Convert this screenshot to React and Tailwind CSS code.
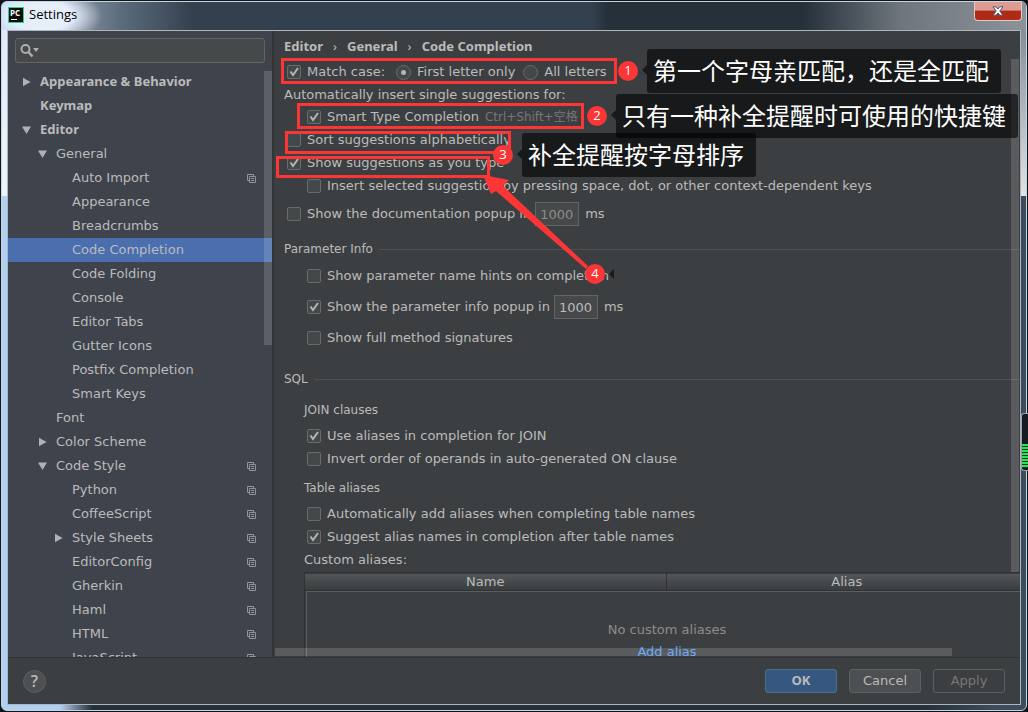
import React from 'react';

const treeItems = [
  { label: 'Appearance & Behavior', level: 0, arrow: 'right', bold: true },
  { label: 'Keymap', level: 0, bold: true },
  { label: 'Editor', level: 0, arrow: 'down', bold: true },
  { label: 'General', level: 1, arrow: 'down' },
  { label: 'Auto Import', level: 2, project: true },
  { label: 'Appearance', level: 2 },
  { label: 'Breadcrumbs', level: 2 },
  { label: 'Code Completion', level: 2, selected: true },
  { label: 'Code Folding', level: 2 },
  { label: 'Console', level: 2 },
  { label: 'Editor Tabs', level: 2 },
  { label: 'Gutter Icons', level: 2 },
  { label: 'Postfix Completion', level: 2 },
  { label: 'Smart Keys', level: 2 },
  { label: 'Font', level: 1 },
  { label: 'Color Scheme', level: 1, arrow: 'right' },
  { label: 'Code Style', level: 1, arrow: 'down', project: true },
  { label: 'Python', level: 2, project: true },
  { label: 'CoffeeScript', level: 2, project: true },
  { label: 'Style Sheets', level: 2, arrow: 'right', project: true },
  { label: 'EditorConfig', level: 2, project: true },
  { label: 'Gherkin', level: 2, project: true },
  { label: 'Haml', level: 2, project: true },
  { label: 'HTML', level: 2, project: true },
  { label: 'JavaScript', level: 2, project: true },
];

const levelPadding = ['pl-3', 'pl-7', 'pl-11'];

const ProjectIcon = () => (
  <svg width="9" height="9" viewBox="0 0 9 9" fill="none" stroke="#8f939a" className="shrink-0">
    <path d="M2 6.5H.5V.5H6.5V2" />
    <path d="M2.5 2.5h6v6h-6zM4 4.5h3M4 6.5h3" />
  </svg>
);

const TreeArrow = ({ direction }) => (
  <svg width="10" height="10" viewBox="0 0 10 10" fill="#afb1b3">
    {direction === 'right' && <path d="M1 .8L8.5 5 1 9.2z" />}
    {direction === 'down' && <path d="M0 1.5h9L4.5 9z" />}
  </svg>
);

const TreeItem = ({ item }) => (
  <li>
    <button
      className={`flex h-6 w-full items-center pr-4 text-left ${levelPadding[item.level]} ${
        item.selected ? 'bg-[#4b6eaf]' : ''
      } ${item.bold ? "font-['Noto_Sans',sans-serif] font-bold" : ''}`}
    >
      <span className="flex w-5 shrink-0 pl-0.5">
        {item.arrow && <TreeArrow direction={item.arrow} />}
      </span>
      <span className="grow whitespace-nowrap">{item.label}</span>
      {item.project && <ProjectIcon />}
    </button>
  </li>
);

const Sidebar = () => (
  <aside className="relative flex w-[266px] shrink-0 flex-col overflow-hidden border-r-2 border-[#333537] bg-[#3f434c]">
    <label className="mx-[7px] my-[7px] flex h-[25px] shrink-0 items-center rounded-[3px] border border-[#646464] bg-[#45494a] px-1">
      <svg width="19" height="14" viewBox="0 0 19 14" fill="none" stroke="#adadad" strokeWidth="2">
        <circle cx="5.5" cy="5" r="4" />
        <path d="M8.5 8l4 4.5" strokeWidth="2.5" />
        <path d="M13 4h6l-3 4z" fill="#adadad" stroke="none" />
      </svg>
      <input aria-label="Search settings" className="min-w-0 grow bg-transparent outline-none" />
    </label>
    <ul>
      {treeItems.map((item) => (
        <TreeItem key={item.label} item={item} />
      ))}
    </ul>
    <div className="absolute top-10 right-0 h-[274px] w-2 bg-white/15" />
  </aside>
);

const checkMark = (
  <svg
    width="10"
    height="10"
    viewBox="0 0 10 10"
    fill="none"
    stroke="#b4b4b4"
    strokeWidth="2"
    className="pointer-events-none absolute top-0.5 left-0.5 hidden peer-checked:block"
  >
    <path d="M1.5 4.5L4 8 9 1" />
  </svg>
);

const Checkbox = ({ label, checked, children }) => (
  <div className="flex h-[22px] items-center">
    <label className="flex items-center gap-1.5 whitespace-nowrap">
      <span className="relative h-3.5 w-3.5 shrink-0">
        <input
          type="checkbox"
          defaultChecked={checked}
          className="peer block h-3.5 w-3.5 appearance-none rounded-[2px] border border-[#6b6b6b] bg-[#43494a]"
        />
        {checkMark}
      </span>
      {label}
    </label>
    {children}
  </div>
);

const Radio = ({ label, checked }) => (
  <label className="flex items-center gap-1.5 whitespace-nowrap">
    <span className="relative h-[15px] w-[15px] shrink-0">
      <input
        type="radio"
        name="match-case"
        defaultChecked={checked}
        className="peer block h-[15px] w-[15px] appearance-none rounded-full border border-[#6b6b6b] bg-[#43494a]"
      />
      <span className="pointer-events-none absolute top-[5px] left-[5px] hidden h-[5px] w-[5px] rounded-full bg-[#b4b4b4] peer-checked:block" />
    </span>
    {label}
  </label>
);

const DelayInput = ({ label, disabled }) => (
  <>
    <input
      aria-label={label}
      defaultValue="1000"
      disabled={disabled}
      className={`ml-1 h-6 w-11 border border-[#646464] bg-[#45494a] px-1 ${
        disabled ? 'text-[#8c8c8c]' : ''
      }`}
    />
    <span className="ml-1.5">ms</span>
  </>
);

const SectionTitle = ({ children }) => (
  <h2 className="flex h-5 items-center gap-1.5 text-[12px] whitespace-nowrap">
    {children}
    <span className="h-px grow bg-[#515151]" />
  </h2>
);

const Breadcrumb = () => (
  <nav className="flex h-6 items-center gap-2.5 font-['Noto_Sans',sans-serif] font-bold whitespace-nowrap">
    <span>Editor</span>
    <span className="font-normal">›</span>
    <span>General</span>
    <span className="font-normal">›</span>
    <span>Code Completion</span>
  </nav>
);

const AliasTable = () => (
  <div className="-mr-2 w-[723px] border-l border-[#2f3133]">
    <table className="w-full table-fixed">
      <thead>
        <tr className="h-[18px] border-y border-[#2f3133] bg-linear-to-b from-[#525658] to-[#3a3d3f]">
          <th className="border-r border-[#2f3133] p-0 leading-4 font-normal">Name</th>
          <th className="border-l border-[#5b5e60] p-0 leading-4 font-normal">Alias</th>
        </tr>
      </thead>
    </table>
    <div className="ml-px flex h-24 flex-col items-center border-t border-l border-[#5b5e60] pt-[27px] text-[#8c8c8c]">
      <p className="leading-[22px]">No custom aliases</p>
      <a href="#add-alias" className="leading-[22px] text-[#589df6]">
        Add alias
      </a>
    </div>
  </div>
);

const CompletionSettings = () => (
  <main className="relative min-w-0 grow overflow-hidden pt-1 pl-2.5">
    <Breadcrumb />
    <div className="mt-0.5 flex flex-col gap-px pl-[3px]">
      <Checkbox label="Match case:" checked>
        <div className="ml-[11px] flex items-center gap-2">
          <Radio label="First letter only" checked />
          <Radio label="All letters" />
        </div>
      </Checkbox>
      <p className="-ml-[3px] leading-[21px]">Automatically insert single suggestions for:</p>
      <div className="pl-5">
        <Checkbox label="Smart Type Completion" checked>
          <span className="ml-1.5 text-[12px] whitespace-nowrap text-[#777]">Ctrl+Shift+空格</span>
        </Checkbox>
      </div>
      <Checkbox label="Sort suggestions alphabetically" />
      <Checkbox label="Show suggestions as you type" checked />
      <div className="pl-5">
        <Checkbox label="Insert selected suggestion by pressing space, dot, or other context-dependent keys" />
      </div>
      <div className="mt-[5px]">
        <Checkbox label="Show the documentation popup in">
          <DelayInput label="Documentation popup delay" disabled />
        </Checkbox>
      </div>
    </div>

    <div className="mt-3.5">
      <SectionTitle>Parameter Info</SectionTitle>
      <div className="mt-1.5 flex flex-col gap-[9px] pl-[23px]">
        <Checkbox label="Show parameter name hints on completion" />
        <Checkbox label="Show the parameter info popup in" checked>
          <DelayInput label="Parameter info popup delay" />
        </Checkbox>
        <Checkbox label="Show full method signatures" />
      </div>
    </div>

    <div className="mt-5">
      <SectionTitle>SQL</SectionTitle>
      <div className="mt-[11px] pl-5">
        <h3 className="text-[12px] leading-5">JOIN clauses</h3>
        <div className="mt-[5px] flex flex-col gap-px pl-[3px]">
          <Checkbox label="Use aliases in completion for JOIN" checked />
          <Checkbox label="Invert order of operands in auto-generated ON clause" />
        </div>
        <h3 className="mt-2 text-[12px] leading-5">Table aliases</h3>
        <div className="mt-[5px] flex flex-col gap-px pl-[3px]">
          <Checkbox label="Automatically add aliases when completing table names" />
          <Checkbox label="Suggest alias names in completion after table names" checked />
        </div>
        <p className="mt-px mb-0.5 leading-[21px]">Custom aliases:</p>
        <AliasTable />
      </div>
    </div>

    <div className="absolute top-7 right-px h-[513px] w-2 bg-white/15" />
    <div className="absolute right-[68px] bottom-px left-px h-2 bg-white/15" />
  </main>
);

const TitleBar = () => (
  <header className="flex h-7 shrink-0 items-start justify-between rounded-t-[5px] bg-[radial-gradient(ellipse_60px_28px_at_40px_14px,#e6eefa_50%,transparent),linear-gradient(90deg,#b6d2f2_0px,#c3d6ee_58px,#8795a6_70px,#5c6b7b_120px,#33414f_190px,#33414f_590px,#25303b_605px,#25303b_800px,#6f767e_900px,#8b929a_100%)] pl-1.5">
    <div className="flex h-[26px] items-center gap-[5px]">
      <svg width="16" height="16" viewBox="0 0 16 16">
        <rect width="16" height="16" fill="#21d789" />
        <rect x="1" y="1" width="14" height="14" fill="#0b0b0b" />
        <text x="2" y="8.5" fill="#fff" fontSize="8" fontWeight="bold" fontFamily="Open Sans">
          PC
        </text>
        <rect x="3" y="12" width="6" height="1" fill="#fff" />
      </svg>
      <h1 className="font-['Open_Sans','Noto_Sans',sans-serif] text-[13px] text-black">Settings</h1>
    </div>
    <button
      aria-label="Close"
      className="mr-1 flex h-[19px] w-12 items-center justify-center rounded-b-[4px] border border-t-0 border-[#e3c9c6] bg-linear-to-b from-[#dc9c94] from-45% to-[#b02a18] to-50%"
    >
      <svg width="12" height="10" viewBox="0 0 12 10">
        <path
          d="M1 .8h3.2L6 3 7.8.8H11L7.8 5 11 9.2H7.8L6 7 4.2 9.2H1L4.2 5z"
          fill="#fff"
          stroke="#4a5268"
        />
      </svg>
    </button>
  </header>
);

const Footer = () => (
  <footer className="flex h-[47px] shrink-0 items-center gap-3 border-t border-[#303234] px-[15px]">
    <button className="mr-auto h-[23px] w-[23px] rounded-full border border-[#5e6162] bg-[#4c5052] font-['Open_Sans',sans-serif] text-[16px] leading-5 font-semibold">
      ?
    </button>
    <button className="h-6 w-[72px] rounded-[3px] border border-[#4c708c] bg-[#365880] font-['Noto_Sans',sans-serif] font-bold">
      OK
    </button>
    <button className="h-6 w-[72px] rounded-[3px] border border-[#5e6060] bg-[#4c5052]">Cancel</button>
    <button disabled className="h-6 w-[72px] rounded-[3px] border border-[#5e6060] text-[#777]">
      Apply
    </button>
  </footer>
);

const Badge = ({ className, children }) => (
  <span
    className={`absolute flex h-5 w-5 items-center justify-center rounded-full bg-[#fc3636] font-['Open_Sans',sans-serif] text-[13px] text-white ${className}`}
  >
    {children}
  </span>
);

const Callout = ({ className, children }) => (
  <div
    className={`absolute flex h-11 items-center rounded-[3px] bg-black/60 pr-3 pb-0.5 pl-1.5 font-['Noto_Sans_CJK_SC',sans-serif] text-[24px] whitespace-nowrap text-white ${className}`}
  >
    <span className="absolute right-full border-y-[5px] border-r-[5px] border-y-transparent border-r-black/60" />
    {children}
  </div>
);

const Annotations = () => (
  <div className="pointer-events-none absolute inset-0 overflow-hidden">
    <div className="absolute top-[58px] left-[281px] h-[26px] w-[336px] border-3 border-[#fc3636]" />
    <div className="absolute top-[103px] left-[297px] h-[26px] w-[287px] border-3 border-[#fc3636]" />
    <div className="absolute top-[131px] left-[285px] h-[23px] w-[226px] border-3 border-[#fc3636]" />
    <div className="absolute top-[156px] left-[276px] h-[22px] w-[214px] border-3 border-[#fc3636]" />
    <svg width="110" height="100" viewBox="0 0 110 100" className="absolute top-[174px] left-[482px]" fill="#fc3636">
      <path d="M1 1L27 6 21 12 106 92 104 95 14 17 9 20z" />
    </svg>
    <Badge className="top-[61px] left-[618px]">1</Badge>
    <Badge className="top-[106px] left-[587px]">2</Badge>
    <Badge className="top-[145px] left-[493px]">3</Badge>
    <Badge className="top-[264px] left-[585px]">4</Badge>
    <span className="absolute top-[269px] left-[609px] border-y-[5px] border-r-[5px] border-y-transparent border-r-[#191a1b]" />
    <Callout className="top-[49px] left-[647px]">第一个字母亲匹配，还是全匹配</Callout>
    <Callout className="top-[94px] left-[616px]">只有一种补全提醒时可使用的快捷键</Callout>
    <Callout className="top-[133px] left-[522px]">补全提醒按字母排序</Callout>
  </div>
);

const LevelMeter = () => (
  <div className="absolute top-[413px] right-0 flex h-[58px] w-[7px] flex-col justify-end rounded-l-[3px] border border-r-0 border-[#9aa0a5] bg-[#161c22] pb-0.5">
    <div className="h-6 bg-[repeating-linear-gradient(#2fe05c_0px_2px,#0d3a1c_2px_3px)]" />
  </div>
);

export default function App() {
  return (
    <div className="flex h-screen flex-col bg-[#10151b] font-['DejaVu_Sans','Noto_Sans_CJK_SC',sans-serif] text-[13px] text-[#bbb]">
      <div className="m-px flex min-h-0 grow flex-col rounded-[6px] border border-[#c8d4de] bg-[linear-gradient(90deg,#b0d0f3_58px,#25303b_90px,#25303b_90%,#3a4c5e_97%)]">
        <TitleBar />
        <div className="flex min-h-0 grow bg-[linear-gradient(#e0eafa,#eef4fc),linear-gradient(#868d95,#dfe3e6)] bg-[size:6px_166px] bg-[position:left_top,right_top] bg-no-repeat px-[5px] pb-[5px]">
          <div className="flex min-h-0 min-w-0 grow flex-col border border-[#aeb6bb] bg-[#3c3f41]">
            <div className="flex min-h-0 grow">
              <Sidebar />
              <CompletionSettings />
            </div>
            <Footer />
          </div>
        </div>
      </div>
      <Annotations />
      <LevelMeter />
    </div>
  );
}
